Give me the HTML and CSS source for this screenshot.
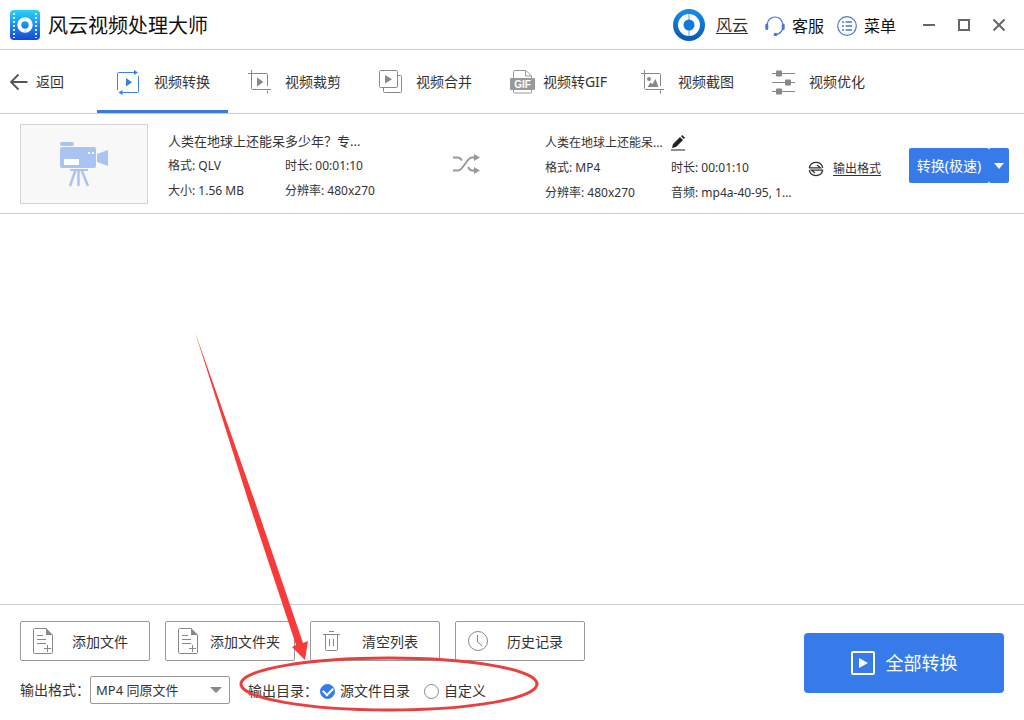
FILE: index.html
```html
<!DOCTYPE html>
<html lang="zh-CN">
<head>
<meta charset="utf-8">
<title>风云视频处理大师</title>
<link rel="stylesheet" href="styles.css">
</head>
<body>
<header class="titlebar">
  <svg class="logo" width="30" height="30" viewBox="0 0 30 30" aria-hidden="true">
    <defs><linearGradient id="logo-fill" x1="0" y1="0" x2="0" y2="1"><stop offset="0" stop-color="#2bd4f7"/><stop offset=".5" stop-color="#1d8df0"/><stop offset="1" stop-color="#1746d6"/></linearGradient></defs>
    <rect width="30" height="30" rx="4" fill="url(#logo-fill)"/>
    <path d="M4 3v25M26 3v25" stroke="#d4f2ff" stroke-width="2" stroke-dasharray="2 2"/>
    <circle cx="15" cy="15" r="5.7" fill="none" stroke="#fff" stroke-width="4"/>
    <path d="M15 7v3M15 20v3" stroke="#a8d4fa"/>
  </svg>
  <h1 class="app-name">风云视频处理大师</h1>
  <div class="account">
    <a class="user" href="#">
      <svg width="32" height="32" viewBox="0 0 32 32" aria-hidden="true">
        <defs><linearGradient id="avatar-fill" x1="0" y1="0" x2="0" y2="1"><stop offset="0" stop-color="#158be6"/><stop offset="1" stop-color="#0a5db5"/></linearGradient></defs>
        <circle cx="16" cy="16" r="13.5" fill="#fff" stroke="url(#avatar-fill)" stroke-width="5"/>
        <path d="M16 5v22" stroke="#7f9fc0"/><circle cx="16" cy="16" r="5.5" fill="#0d7bdc"/>
      </svg>
      <span class="user-name">风云</span>
    </a>
    <button class="head-button" type="button">
      <svg width="20" height="20" viewBox="0 0 20 20" fill="none" stroke="#4a76dc" stroke-width="1.2" aria-hidden="true">
        <path d="M2.500 8a7.500 7 0 0 1 15 0M17.500 13c-.7 3-2.500 4.500-6 5.500"/>
        <path d="M1.800 9v3.500M18.200 9v3.500" stroke-width="3" stroke-linecap="round"/><circle cx="10.500" cy="18.500" r="1.200" fill="#4a76dc"/>
      </svg>客服
    </button>
    <button class="head-button" type="button">
      <svg width="20" height="20" viewBox="0 0 20 20" fill="none" stroke="#4a76dc" aria-hidden="true">
        <circle cx="10" cy="10" r="9.300" stroke-width="1.200"/>
        <path d="M5 6h2M5 10h2M5 14h2M8.500 6H15M8.500 10H15M8.500 14H15" stroke-width="1.600"/>
      </svg>菜单
    </button>
  </div>
  <div class="window-controls">
    <button type="button" aria-label="最小化"><svg width="14" height="14" viewBox="0 0 14 14"><path d="M1 7h12"/></svg></button>
    <button type="button" aria-label="最大化"><svg width="14" height="14" viewBox="0 0 14 14"><path d="M2 2h10v10H2z"/></svg></button>
    <button type="button" aria-label="关闭"><svg width="14" height="14" viewBox="0 0 14 14"><path d="M1.500 1.500l11 11M12.500 1.500l-11 11"/></svg></button>
  </div>
</header>

<nav class="toolbar">
  <button class="back" type="button">
    <svg width="18" height="18" viewBox="0 0 18 18" fill="none" stroke="#555" stroke-width="1.800" aria-hidden="true"><path d="M17.500 9H1M8.500 1.500L1 9l7.500 7.500"/></svg>返回
  </button>
  <div class="tabs">
    <button class="tab tab-active" type="button">
      <svg width="26" height="28" viewBox="0 0 26 28" fill="none" stroke="#3b7fe0" aria-hidden="true">
        <path d="M.500 22V5.500Q.500 4.500 1.500 4.500H17M21.500 8v15.500q0 1-1 1H5"/><path d="M17 2l4 2.500L17 7zM5.500 22l-4 2.500 4 2.500zM9 10v8.500l6-4.200z" fill="#3b7fe0" stroke="none"/>
      </svg><span>视频转换</span>
    </button>
    <button class="tab" type="button">
      <svg width="26" height="28" viewBox="0 0 26 28" fill="none" stroke="#888" aria-hidden="true">
        <path d="M3.500 2v18.500q0 1 1 1H23M0 5.500h18.500q1 0 1 1V18M19.500 22.500v3"/><path d="M9 9.500v9l6.500-4.500z" fill="#888" stroke="none"/>
      </svg><span>视频裁剪</span>
    </button>
    <button class="tab" type="button">
      <svg width="26" height="28" viewBox="0 0 26 28" fill="none" stroke="#888" aria-hidden="true">
        <rect x=".500" y="2.500" width="18" height="17" rx="1"/><path d="M18.500 7.500h3q1 0 1 1v15q0 1-1 1h-16q-1 0-1-1v-4"/><path d="M6 7v8.500l7-4.200z" fill="#888" stroke="none"/>
      </svg><span>视频合并</span>
    </button>
    <button class="tab" type="button">
      <svg width="26" height="28" viewBox="0 0 26 28" fill="none" stroke="#999" aria-hidden="true">
        <path d="M3.500 11V3.500q0-1 1-1H16l5.500 5.500v3M15.500 2.500v5.500h6M3.500 22v2q0 1 1 1h16q1 0 1-1v-2"/><rect y="10" width="25" height="12" rx="1" fill="#999" stroke="none"/>
        <text class="gif-mark" x="12.500" y="20" text-anchor="middle">GIF</text>
      </svg><span>视频转GIF</span>
    </button>
    <button class="tab" type="button">
      <svg width="26" height="28" viewBox="0 0 26 28" fill="none" stroke="#888" aria-hidden="true">
        <path d="M3.500 2v18.500q0 1 1 1H23M0 5.500h18.500q1 0 1 1V18M19.500 22.500v3"/><g fill="#888" stroke="none"><circle cx="8" cy="11" r="2"/><path d="M6.500 19l3-4.500 2 1.500 3-5 3 8z"/></g>
      </svg><span>视频截图</span>
    </button>
    <button class="tab" type="button">
      <svg width="26" height="28" viewBox="0 0 26 28" fill="none" stroke="#888" aria-hidden="true">
        <path d="M0 5.500h23M0 14.500h23M0 23.500h23"/><g fill="#888" stroke="none"><rect x="4" y="2.500" width="6" height="6" rx="1"/><rect x="13" y="11.500" width="6" height="6" rx="1"/><rect x="4" y="20.500" width="6" height="6" rx="1"/></g>
      </svg><span>视频优化</span>
    </button>
  </div>
</nav>

<main class="file-list">
  <article class="file">
    <div class="thumb">
      <svg width="50" height="46" viewBox="0 0 50 46" fill="#a9c4f3" aria-hidden="true">
        <rect x="1" y="1" width="14" height="4" rx="2"/><path d="M3 6h32q2 0 2 2v17q0 2-2 2H3q-2 0-2-2V8q0-2 2-2z"/>
        <path d="M38 13l11-4v16l-11-4z"/><path d="M11 28h18v2H11z"/>
        <path d="M16.500 29L11 45M22.500 29L29 45M19.500 29v16" stroke="#a9c4f3" stroke-width="2.500"/>
        <path d="M5 18h15v6H5zM29 11h2v2h-2zM33 11h2v2h-2z" fill="#fff"/>
      </svg>
    </div>
    <div class="details source">
      <h2 class="file-name source-name">人类在地球上还能呆多少年？专...</h2>
      <span>格式: QLV</span><span>时长: 00:01:10</span>
      <span>大小: 1.56 MB</span><span>分辨率: 480x270</span>
    </div>
    <svg width="28" height="20" viewBox="0 0 28 20" fill="none" stroke="#999" stroke-width="2" aria-hidden="true">
      <path d="M0 3.500h5q2 0 4 3M0 16.500h5q2 0 4-2.500l6-8q2-2.500 4-2.500h4M15 13q2 3.500 4 3.500h4"/><path d="M21 0l6 3.500L21 7zM21 13l6 3.500-6 3.500z" fill="#999" stroke="none"/>
    </svg>
    <div class="details target">
      <h2 class="file-name">人类在地球上还能呆...
        <button class="rename" type="button" aria-label="重命名"><svg width="14" height="16" viewBox="0 0 14 16" fill="#222"><path d="M1 13l1-4 7-7 3 3-7 7zM10 1.200L11.200 0 14 2.800 12.800 4zM0 14.500h14v1H0z"/></svg></button>
      </h2>
      <span>格式: MP4</span><span>时长: 00:01:10</span>
      <span>分辨率: 480x270</span><span>音频: mp4a-40-95, 1...</span>
    </div>
    <a class="format-link" href="#">
      <svg width="16" height="16" viewBox="0 0 16 16" fill="none" stroke="#333" stroke-width="1.300" aria-hidden="true"><path d="M1.200 6.800a7 7 0 0 1 13.600 0M14.800 9.200a7 7 0 0 1-13.600 0M1 6.800h11.500L9 4M15 9.200H3.500L7 12"/></svg>
      <span class="format-text">输出格式</span>
    </a>
    <div class="split">
      <button class="convert" type="button">转换(极速)</button>
      <button class="more" type="button" aria-label="更多转换方式"></button>
    </div>
  </article>
</main>

<footer class="bottom">
  <div class="options">
    <div class="actions">
      <button class="action" type="button">
        <svg width="22" height="26" viewBox="0 0 22 26" fill="none" stroke="#888" aria-hidden="true"><path d="M13.500.500h-12q-1 0-1 1v23q0 1 1 1h17q1 0 1-1V7M4 7.500h6M4 11.500h9M4 15.500h9M11 20.500h7M14.500 17v7"/><path d="M13 0v7h7z" fill="#888" stroke="none"/></svg><span>添加文件</span>
      </button>
      <button class="action" type="button">
        <svg width="22" height="26" viewBox="0 0 22 26" fill="none" stroke="#888" aria-hidden="true"><path d="M13.500.500h-12q-1 0-1 1v23q0 1 1 1h17q1 0 1-1V7M4 7.500h6M4 11.500h9M4 15.500h9M11 20.500h7M14.500 17v7"/><path d="M13 0v7h7z" fill="#888" stroke="none"/></svg><span>添加文件夹</span>
      </button>
      <button class="action" type="button">
        <svg width="22" height="26" viewBox="0 0 22 26" fill="none" stroke="#888" aria-hidden="true"><path d="M0 6.500h17M6 3.500h5M2.500 6.500v15q0 1 1 1h10q1 0 1-1v-15M6.500 11v7M10.500 11v7"/></svg><span>清空列表</span>
      </button>
      <button class="action" type="button">
        <svg width="22" height="26" viewBox="0 0 22 26" fill="none" stroke="#888" aria-hidden="true"><circle cx="10" cy="13" r="9.500"/><path d="M9.500 7v7l5 4"/></svg><span>历史记录</span>
      </button>
    </div>
    <div class="output">
      <label class="format-label" for="format">输出格式：</label>
      <div class="select-box"><select id="format"><option>MP4 同原文件</option></select></div>
      <div class="directory" role="radiogroup" aria-labelledby="dir-label">
        <span class="directory-label" id="dir-label">输出目录：</span>
        <label class="choice"><input type="radio" name="dir" checked>源文件目录</label>
        <label class="choice"><input type="radio" name="dir">自定义</label>
      </div>
    </div>
  </div>
  <button class="convert-all" type="button">
    <svg width="24" height="24" viewBox="0 0 24 24" fill="none" stroke="#fff" stroke-width="2" aria-hidden="true"><rect x="1" y="1" width="22" height="22" rx="1"/><path d="M8 7v10l9-5z" fill="#fff" stroke="none"/></svg>全部转换
  </button>
</footer>

<svg class="annotation" width="345" height="384" viewBox="0 0 345 384" aria-hidden="true">
  <path d="M0 0L59 167 108 311 113 309 110 328 97 315 101 313 53 168z" fill="#f93a3a"/>
  <ellipse cx="194" cy="352" rx="148" ry="26" fill="none" stroke="#e8403f" stroke-width="3"/>
</svg>
</body>
</html>
```
FILE: styles.css
```css
* { box-sizing: border-box; }
body {
  margin: 0;
  min-height: 100vh;
  display: flex;
  flex-direction: column;
  position: relative;
  background: #fff;
  color: #333;
  font: 14px/20px "Noto Sans", "Noto Sans CJK SC", sans-serif;
}
button, select { font: inherit; color: inherit; }
button { padding: 0; border: 0; background: none; cursor: pointer; }
svg { flex: none; }
h1, h2 { margin: 0; font-weight: 400; }

.titlebar {
  display: flex;
  align-items: center;
  height: 50px;
  padding: 0 18px 0 10px;
  border-bottom: 1px solid #ccc;
  color: #111;
}
.app-name { margin-left: 8px; padding-top: 2px; font-size: 20px; line-height: 28px; }
.account { display: flex; align-items: center; gap: 13px; margin-left: auto; font-size: 16px; }
.user { display: flex; align-items: center; gap: 11px; margin-right: 4px; color: #333; text-decoration: none; }
.user-name { text-decoration: underline; text-underline-offset: 2px; }
.head-button { display: flex; align-items: center; gap: 7px; padding-top: 2px; }
.window-controls { display: flex; gap: 21px; margin-left: 26px; }
.window-controls svg { display: block; fill: none; stroke: #666; stroke-width: 2; }

.toolbar { display: flex; height: 64px; border-bottom: 1px solid #ccc; }
.back { display: flex; align-items: center; gap: 8px; width: 97px; padding-left: 10px; }
.tabs { display: flex; }
.tab {
  display: flex;
  align-items: center;
  width: 131px;
  padding: 3px 7px 0 20px;
  border-bottom: 3px solid transparent;
}
.tab span { flex: 1; text-align: center; }
.tab-active { border-bottom-color: #3b7bdb; }
.gif-mark { font: bold 10px "Liberation Sans", sans-serif; fill: #fff; stroke: none; }

.file-list { flex: 1; }
.file {
  display: grid;
  grid-template-columns: 148px 285fr 92px 263fr 101px 100px;
  align-items: center;
  height: 100px;
  padding: 0 15px 0 20px;
  border-bottom: 1px solid #ccc;
}
.thumb {
  display: flex;
  align-items: center;
  justify-content: center;
  width: 128px;
  height: 80px;
  border: 1px solid #d5d5d5;
  background: #f8f8f8;
}
.details { display: grid; row-gap: 5px; font-size: 12px; white-space: nowrap; }
.source { grid-template-columns: 117px 1fr; padding-top: 4px; }
.target { grid-template-columns: 126px 1fr; padding-top: 8px; }
.file-name { grid-column: 1 / -1; display: flex; align-items: center; gap: 8px; font-size: 12px; }
.source-name { font-size: 13px; }
.rename svg { display: block; }
.format-link { display: flex; align-items: center; gap: 9px; padding-top: 10px; color: #333; font-size: 12px; text-decoration: none; }
.format-text { text-decoration: underline; text-underline-offset: 2px; }
.split { display: flex; height: 35px; margin-top: 4px; color: #fff; }
.convert { flex: 1; border-radius: 2px; background: #377bea; }
.more { display: grid; place-items: center; width: 20px; border-radius: 2px; background: #377bea; }
.more::before { content: ""; border: 5px solid transparent; border-top: 6px solid #fff; border-bottom: 0; }

.bottom {
  display: flex;
  align-items: center;
  justify-content: space-between;
  padding: 16px 20px;
  border-top: 1px solid #ccc;
}
.options { display: grid; gap: 15px; }
.actions { display: flex; gap: 15px; }
.action {
  display: flex;
  align-items: center;
  width: 130px;
  height: 40px;
  padding: 0 4px 0 12px;
  border: 1px solid #999;
  border-radius: 2px;
}
.action span { flex: 1; padding-top: 2px; text-align: center; }
.output { display: flex; align-items: center; }
.format-label { width: 70px; }
.select-box { position: relative; width: 140px; }
.select-box::after {
  content: "";
  position: absolute;
  right: 8px;
  top: 11px;
  border: 6px solid transparent;
  border-top-color: #888;
  border-bottom: 0;
  pointer-events: none;
}
.select-box select {
  display: block;
  width: 100%;
  height: 28px;
  padding: 0 5px;
  appearance: none;
  border: 1px solid #999;
  border-radius: 2px;
  background: #fff;
  font-size: 13px;
}
.directory { display: flex; align-items: center; gap: 14px; margin-left: 18px; padding-top: 2px; }
.directory-label { width: 58px; white-space: nowrap; }
.choice { display: flex; align-items: center; gap: 5px; }
.choice input {
  display: grid;
  place-items: center;
  width: 15px;
  height: 15px;
  margin: 0;
  appearance: none;
  border: 1px solid #888;
  border-radius: 50%;
}
.choice input:checked { border-color: #377bea; background: #377bea; }
.choice input:checked::after {
  content: "";
  width: 8px;
  height: 5px;
  margin-bottom: 2px;
  border-left: 2px solid #fff;
  border-bottom: 2px solid #fff;
  transform: rotate(-45deg);
}
.convert-all {
  display: flex;
  align-items: center;
  justify-content: center;
  gap: 11px;
  width: 200px;
  height: 60px;
  border-radius: 4px;
  background: #377bea;
  color: #fff;
  font-size: 18px;
}
.annotation { position: absolute; left: 195px; bottom: 4px; pointer-events: none; }
```
